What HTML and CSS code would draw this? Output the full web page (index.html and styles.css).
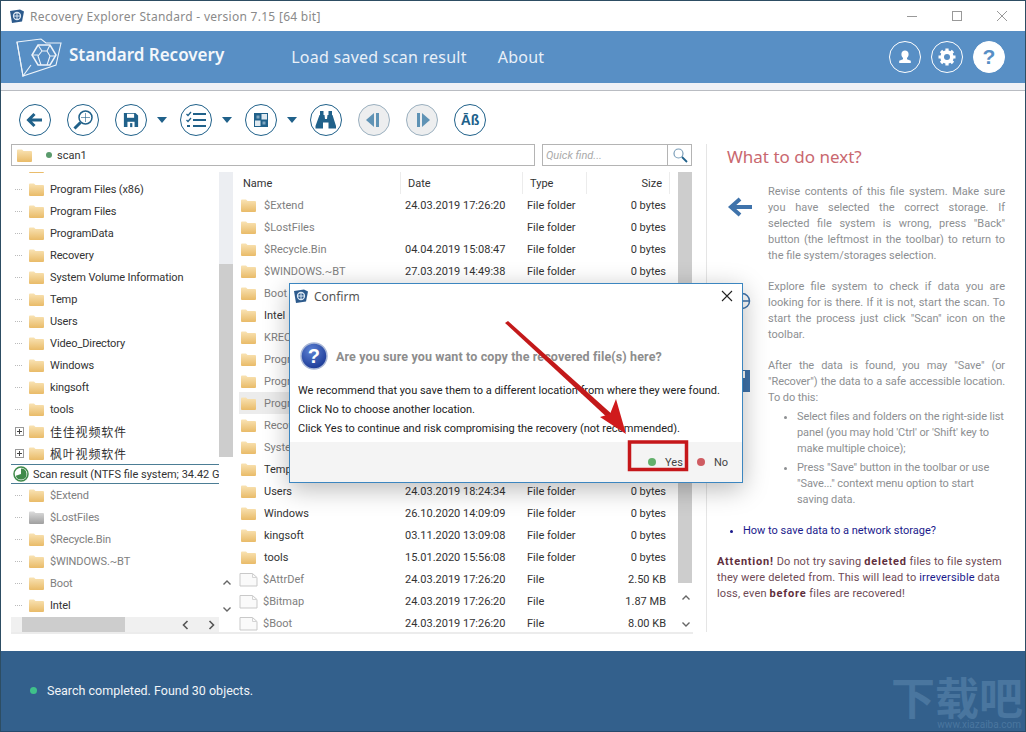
FILE: index.html
```html
<!DOCTYPE html>
<html lang="en">
<head>
    <meta charset="UTF-8">
    <meta name="viewport" content="width=device-width, initial-scale=1.0">
    <title>Recovery Explorer Standard</title>
    <link rel="stylesheet" href="styles.css">
</head>
<body>

    <!-- shared icons -->
    <svg class="defs" width="0" height="0">
        <defs>
            <linearGradient id="fold" x1="0" y1="0" x2="0" y2="1">
                <stop offset="0" stop-color="#f9e3b4"/>
                <stop offset="1" stop-color="#e9bb68"/>
            </linearGradient>
            <linearGradient id="foldgray" x1="0" y1="0" x2="0" y2="1">
                <stop offset="0" stop-color="#dcdcdc"/>
                <stop offset="1" stop-color="#9f9f9f"/>
            </linearGradient>
            <radialGradient id="qmark" cx="0.4" cy="0.3" r="0.8">
                <stop offset="0" stop-color="#5d82d4"/>
                <stop offset="1" stop-color="#13308e"/>
            </radialGradient>
        </defs>
        <symbol id="folder" viewBox="0 0 17 15">
            <path d="M1 2.500q0-1 1-1h4l1.500 1.500h7.500q1 0 1 1v9q0 1-1 1h-13q-1 0-1-1z" fill="url(#fold)"/>
        </symbol>
        <symbol id="folder-gray" viewBox="0 0 17 15">
            <path d="M1 2.500q0-1 1-1h4l1.500 1.500h7.500q1 0 1 1v9q0 1-1 1h-13q-1 0-1-1z" fill="url(#foldgray)"/>
        </symbol>
        <symbol id="file" viewBox="0 0 19 15">
            <path d="M1 1.500h12.500l4.500 4v8.500h-17z" fill="#fafafa" stroke="#c9c9c9"/>
            <path d="M13.500 1.500v4h4.500" fill="none" stroke="#d4d4d4"/>
        </symbol>
        <symbol id="applogo" viewBox="0 0 16 15">
            <path d="M1 2l10-1.500 4 2-2 10-10 1.500z" fill="#2c5a8c"/>
            <circle cx="8" cy="7" r="3.500" fill="none" stroke="#dbe7f3" stroke-width="1.300"/>
            <path d="M8 3.500v7M4.800 7h6.400" stroke="#dbe7f3"/>
        </symbol>
        <symbol id="chev" viewBox="0 0 10 7">
            <path d="M1.500 5.500l3.500-3.500 3.500 3.500" fill="none" stroke="#666" stroke-width="1.400"/>
        </symbol>
    </svg>

    <div class="window">

        <!-- title bar -->
        <div class="titlebar">
            <svg class="app-icon"><use href="#applogo"/></svg>
            <span class="title-text">Recovery Explorer Standard - version 7.15 [64 bit]</span>
            <div class="win-btns">
                <svg width="12" height="12" viewBox="0 0 12 12"><path d="M1 6.500h10" stroke="#999"/></svg>
                <svg width="12" height="12" viewBox="0 0 12 12"><rect x="1.500" y="1.500" width="9" height="9" fill="none" stroke="#999"/></svg>
                <svg width="12" height="12" viewBox="0 0 12 12"><path d="M1 1l10 10M11 1l-10 10" stroke="#999"/></svg>
            </div>
        </div>

        <!-- blue header -->
        <div class="header">
            <svg class="logo" width="46" height="40" viewBox="0 0 46 40" fill="none" stroke="#eef4fa" stroke-width="1.100">
                <path d="M1 5l24-3 5 4h15l-5 22-33 11z"/>
                <path d="M1 5l6 34 8-11"/>
                <path d="M22 8h12l6 10-6 10h-12l-6-10z" stroke-width="1.500"/>
                <path d="M22 8l4 6h5l3-6M26 14l-4 5 3 9M31 14l3 5-3 9M16 18h6M34 19h6" stroke-width="1.100"/>
            </svg>
            <span class="brand">Standard Recovery</span>
            <a class="nav-link nav-first">Load saved scan result</a>
            <a class="nav-link">About</a>
            <div class="head-btns">
                <div class="head-btn">
                    <svg width="18" height="18" viewBox="0 0 18 18"><path d="M9 2.500a3.600 3.600 0 0 1 3.600 3.800c0 1.600-.8 3-1.600 3.600v1.300l3.800 1.500v2.300h-11.600v-2.300l3.800-1.500v-1.300c-.8-.6-1.600-2-1.600-3.600a3.600 3.600 0 0 1 3.600-3.800z" fill="#fff"/></svg>
                </div>
                <div class="head-btn">
                    <svg width="22" height="22" viewBox="0 0 22 22"><circle cx="11" cy="11" r="5" fill="none" stroke="#fff" stroke-width="3.400"/><path d="M11 2.500v17M2.500 11h17M5 5l12 12M17 5l-12 12" stroke="#fff" stroke-width="3.200"/><circle cx="11" cy="11" r="3" fill="#588fc5"/></svg>
                </div>
                <div class="head-btn head-btn-help">?</div>
            </div>
        </div>
        <div class="head-strip"></div>

        <div class="content">
            <div class="left">

                <!-- toolbar -->
                <div class="toolbar">
                    <div class="tool">
                        <svg width="20" height="20" viewBox="0 0 20 20"><path d="M3 10h14M9.500 4l-6 6 6 6" fill="none" stroke="#20618a" stroke-width="3"/></svg>
                    </div>
                    <div class="tool">
                        <svg width="24" height="24" viewBox="0 0 24 24" fill="none" stroke="#20618a"><circle cx="14.500" cy="9.500" r="6.500" stroke-width="1.500"/><path d="M9.500 14.500l-6 6" stroke-width="3"/><path d="M14.500 5v9M10 9.500h9" stroke-width="1" opacity=".6"/></svg>
                    </div>
                    <div class="tool">
                        <svg width="16" height="16" viewBox="0 0 18 18"><path d="M1 1h13l3 3v13h-16z" fill="#20618a"/><rect x="4.500" y="2" width="8" height="4.500" fill="#fff"/><rect x="5" y="11" width="8" height="6" fill="#fff"/><rect x="8" y="12.500" width="2.500" height="4.500" fill="#20618a"/></svg>
                    </div>
                    <div class="caret"></div>
                    <div class="tool">
                        <svg width="22" height="20" viewBox="0 0 22 20" fill="none" stroke="#20618a"><path d="M1.500 4l1.500 1.500 3-3.500M1.500 10l1.500 1.500 3-3.500" stroke-width="1.300"/><path d="M2 16h3" stroke-width="2"/><path d="M8 4h13M8 10h13M8 16h13" stroke-width="2"/></svg>
                    </div>
                    <div class="caret"></div>
                    <div class="tool">
                        <svg width="14" height="14" viewBox="0 0 14 14"><rect width="14" height="14" fill="#20618a"/><rect x="7.500" y="1" width="5.500" height="5.500" fill="#dfe9f0"/><rect x="1" y="7.500" width="5.500" height="5.500" fill="#dfe9f0"/><rect x="2.500" y="2.500" width="3" height="3" fill="#7fa6c0"/><rect x="8.500" y="8.500" width="3" height="3" fill="#7fa6c0"/></svg>
                    </div>
                    <div class="caret"></div>
                    <div class="tool">
                        <svg width="22" height="20" viewBox="0 0 22 20" fill="#20618a"><path d="M5 1h3.500v4h-3.500zM13.500 1h3.500v4h-3.500z"/><path d="M4.500 5h5l.5 4h2l.5-4h5l3.500 11v2.500h-7.500v-6h-5.500v6h-7.500v-2.500z"/></svg>
                    </div>
                    <div class="tool tool-off">
                        <svg width="18" height="16" viewBox="0 0 18 16" fill="#5f93b5"><path d="M9 1v14l-8-7z"/><rect x="11" y="1" width="3" height="14"/></svg>
                    </div>
                    <div class="tool tool-off">
                        <svg width="18" height="16" viewBox="0 0 18 16" fill="#5f93b5"><rect x="4" y="1" width="3" height="14"/><path d="M9 1v14l8-7z"/></svg>
                    </div>
                    <div class="tool tool-text">Āß</div>
                </div>

                <!-- path + quick find -->
                <div class="searchrow">
                    <div class="pathbar">
                        <svg class="ico ico-path"><use href="#folder"/></svg>
                        <span class="dot dot-green"></span>
                        <span>scan1</span>
                    </div>
                    <div class="quick">
                        <span class="quick-text">Quick find...</span>
                        <div class="quick-btn">
                            <svg width="16" height="16" viewBox="0 0 16 16" fill="none"><circle cx="6.500" cy="6.500" r="4.500" stroke="#7a9db8" stroke-width="1.200"/><path d="M10 10l5 5" stroke="#20618a" stroke-width="1.800"/></svg>
                        </div>
                    </div>
                </div>

                <div class="panes">

                    <!-- tree -->
                    <div class="tree">
                        <div class="tree-inner">
                            <div class="tree-rows">
                                <div class="cut-row"><svg class="ico"><use href="#folder"/></svg></div>
                                <div class="trow"><i class="dots"></i><svg class="ico"><use href="#folder"/></svg>Program Files (x86)</div>
                                <div class="trow"><i class="dots"></i><svg class="ico"><use href="#folder"/></svg>Program Files</div>
                                <div class="trow"><i class="dots"></i><svg class="ico"><use href="#folder"/></svg>ProgramData</div>
                                <div class="trow"><i class="dots"></i><svg class="ico"><use href="#folder"/></svg>Recovery</div>
                                <div class="trow"><i class="dots"></i><svg class="ico"><use href="#folder"/></svg>System Volume Information</div>
                                <div class="trow"><i class="dots"></i><svg class="ico"><use href="#folder"/></svg>Temp</div>
                                <div class="trow"><i class="dots"></i><svg class="ico"><use href="#folder"/></svg>Users</div>
                                <div class="trow"><i class="dots"></i><svg class="ico"><use href="#folder"/></svg>Video_Directory</div>
                                <div class="trow"><i class="dots"></i><svg class="ico"><use href="#folder"/></svg>Windows</div>
                                <div class="trow"><i class="dots"></i><svg class="ico"><use href="#folder"/></svg>kingsoft</div>
                                <div class="trow"><i class="dots"></i><svg class="ico"><use href="#folder"/></svg>tools</div>
                                <div class="trow cjk"><i class="plus"></i><svg class="ico"><use href="#folder"/></svg>佳佳视频软件</div>
                                <div class="trow cjk"><i class="plus"></i><svg class="ico"><use href="#folder"/></svg>枫叶视频软件</div>
                                <div class="scanrow">
                                    <svg width="16" height="16" viewBox="0 0 16 16"><circle cx="8" cy="8" r="7" fill="#fff" stroke="#3f8a4a" stroke-width="1.500"/><path d="M8 8v-5.500a5.500 5.500 0 1 1-5.200 7.200z" fill="#3f8a4a"/></svg>
                                    <span>Scan result (NTFS file system; 34.42 GB)</span>
                                </div>
                                <div class="trow muted"><i class="dots"></i><svg class="ico"><use href="#folder"/></svg>$Extend</div>
                                <div class="trow muted"><i class="dots"></i><svg class="ico"><use href="#folder-gray"/></svg>$LostFiles</div>
                                <div class="trow muted"><i class="dots"></i><svg class="ico"><use href="#folder"/></svg>$Recycle.Bin</div>
                                <div class="trow muted"><i class="dots"></i><svg class="ico"><use href="#folder"/></svg>$WINDOWS.~BT</div>
                                <div class="trow muted"><i class="dots"></i><svg class="ico"><use href="#folder"/></svg>Boot</div>
                                <div class="trow"><i class="dots"></i><svg class="ico"><use href="#folder"/></svg>Intel</div>
                            </div>
                            <div class="vscroll">
                                <div class="track-top"></div>
                                <div class="thumb tree-thumb"></div>
                                <svg class="chev chev-up"><use href="#chev"/></svg>
                                <svg class="chev chev-down"><use href="#chev"/></svg>
                            </div>
                        </div>
                        <div class="hscroll">
                            <div class="hgap"></div>
                            <div class="hthumb"></div>
                            <div class="harrows">
                                <svg width="7" height="10" viewBox="0 0 7 10"><path d="M5.500 1l-4 4 4 4" fill="none" stroke="#555" stroke-width="1.600"/></svg>
                                <svg width="7" height="10" viewBox="0 0 7 10"><path d="M1.500 1l4 4-4 4" fill="none" stroke="#555" stroke-width="1.600"/></svg>
                            </div>
                        </div>
                    </div>

                    <!-- file list -->
                    <div class="list">
                        <div class="list-rows">
                            <div class="lhead">
                                <div>Name</div><div>Date</div><div>Type</div><div class="size">Size</div>
                            </div>
                            <div class="lrow muted"><div class="cname"><svg class="ico"><use href="#folder"/></svg>$Extend</div><div class="dark">24.03.2019 17:26:20</div><div class="dark">File folder</div><div class="size dark">0 bytes</div></div>
                            <div class="lrow muted"><div class="cname"><svg class="ico"><use href="#folder"/></svg>$LostFiles</div><div></div><div class="dark">File folder</div><div class="size dark">0 bytes</div></div>
                            <div class="lrow muted"><div class="cname"><svg class="ico"><use href="#folder"/></svg>$Recycle.Bin</div><div class="dark">04.04.2019 15:08:47</div><div class="dark">File folder</div><div class="size dark">0 bytes</div></div>
                            <div class="lrow muted"><div class="cname"><svg class="ico"><use href="#folder"/></svg>$WINDOWS.~BT</div><div class="dark">27.03.2019 14:49:38</div><div class="dark">File folder</div><div class="size dark">0 bytes</div></div>
                            <div class="lrow muted"><div class="cname"><svg class="ico"><use href="#folder"/></svg>Boot</div></div>
                            <div class="lrow"><div class="cname"><svg class="ico"><use href="#folder"/></svg>Intel</div></div>
                            <div class="lrow muted"><div class="cname"><svg class="ico"><use href="#folder"/></svg>KRECYCLE</div></div>
                            <div class="lrow muted"><div class="cname"><svg class="ico"><use href="#folder"/></svg>Program Files</div></div>
                            <div class="lrow muted"><div class="cname"><svg class="ico"><use href="#folder"/></svg>Program Files (x86)</div></div>
                            <div class="lrow muted lrow-sel"><div class="cname"><svg class="ico"><use href="#folder"/></svg>ProgramData</div></div>
                            <div class="lrow muted"><div class="cname"><svg class="ico"><use href="#folder"/></svg>Recovery</div></div>
                            <div class="lrow muted"><div class="cname"><svg class="ico"><use href="#folder"/></svg>System Volume</div></div>
                            <div class="lrow"><div class="cname"><svg class="ico"><use href="#folder"/></svg>Temp</div></div>
                            <div class="lrow"><div class="cname"><svg class="ico"><use href="#folder"/></svg>Users</div><div>24.03.2019 18:24:34</div><div>File folder</div><div class="size">0 bytes</div></div>
                            <div class="lrow"><div class="cname"><svg class="ico"><use href="#folder"/></svg>Windows</div><div>26.10.2020 14:09:09</div><div>File folder</div><div class="size">0 bytes</div></div>
                            <div class="lrow"><div class="cname"><svg class="ico"><use href="#folder"/></svg>kingsoft</div><div>03.11.2020 13:09:08</div><div>File folder</div><div class="size">0 bytes</div></div>
                            <div class="lrow"><div class="cname"><svg class="ico"><use href="#folder"/></svg>tools</div><div>15.01.2020 15:56:08</div><div>File folder</div><div class="size">0 bytes</div></div>
                            <div class="lrow muted"><div class="cname"><svg class="ico ico-file"><use href="#file"/></svg>$AttrDef</div><div class="dark">24.03.2019 17:26:20</div><div class="dark">File</div><div class="size dark">2.50 KB</div></div>
                            <div class="lrow muted"><div class="cname"><svg class="ico ico-file"><use href="#file"/></svg>$Bitmap</div><div class="dark">24.03.2019 17:26:20</div><div class="dark">File</div><div class="size dark">1.87 MB</div></div>
                            <div class="lrow muted"><div class="cname"><svg class="ico ico-file"><use href="#file"/></svg>$Boot</div><div class="dark">24.03.2019 17:26:20</div><div class="dark">File</div><div class="size dark">8.00 KB</div></div>
                        </div>
                        <div class="vscroll">
                            <div class="thumb list-thumb"></div>
                            <svg class="chev chev-up"><use href="#chev"/></svg>
                            <svg class="chev chev-down"><use href="#chev"/></svg>
                        </div>
                    </div>
                </div>
            </div>

            <!-- help panel -->
            <div class="help">
                <h2>What to do next?</h2>
                <div class="help-item">
                    <svg class="help-arrow" width="26" height="22" viewBox="0 0 26 22"><path d="M25 11h-20M13 3l-9 8 9 8" fill="none" stroke="#3f73ab" stroke-width="4"/></svg>
                    <p>Revise contents of this file system. Make sure you have selected the correct storage. If selected file system is wrong, press "Back" button (the leftmost in the toolbar) to return to the file system/storages selection.</p>
                </div>
                <div class="help-item">
                    <div class="help-ico"></div>
                    <p>Explore file system to check if data you are looking for is there. If it is not, start the scan. To start the process just click "Scan" icon on the toolbar.</p>
                </div>
                <div class="help-item tight">
                    <div class="help-ico"></div>
                    <div>
                        <p>After the data is found, you may "Save" (or "Recover") the data to a safe accessible location. To do this:</p>
                        <ul>
                            <li>Select files and folders on the right-side list panel (you may hold 'Ctrl' or 'Shift' key to make multiple choice);</li>
                            <li>Press "Save" button in the toolbar or use "Save..." context menu option to start saving data.</li>
                        </ul>
                    </div>
                </div>
                <ul class="help-link"><li>How to save data to a network storage?</li></ul>
                <p class="attention"><b class="att-red">Attention!</b> Do not try saving <b>deleted</b> files to file system they were deleted from. This will lead to <span class="irr">irreversible</span> data loss, even <b>before</b> files are recovered!</p>
            </div>
        </div>

        <!-- status bar -->
        <div class="statusbar">
            <span class="dot dot-status"></span>
            <span>Search completed. Found 30 objects.</span>
        </div>

        <div class="watermark">
            <div class="wm-big">下载吧</div>
            <div class="wm-small">www.xiazaiba.com</div>
        </div>

        <!-- parts of help icons that stick out from behind the dialog -->
        <svg class="peek peek-scan" width="13" height="18" viewBox="0 0 13 18" fill="none" stroke="#3f73ab" stroke-width="1.500"><path d="M0 1.500a7.500 7.500 0 0 1 0 15M0 9h7"/></svg>
        <svg class="peek peek-save" width="9" height="24" viewBox="0 0 9 24"><path d="M0 0h8v22h-8z" fill="#3f73ab"/><rect x="0" y="1" width="3" height="7" fill="#fff"/></svg>

        <!-- confirm dialog -->
        <div class="dialog">
            <div class="dlg-title">
                <svg class="app-icon"><use href="#applogo"/></svg>
                <span>Confirm</span>
                <svg class="dlg-close" width="12" height="12" viewBox="0 0 12 12"><path d="M1 1l10 10M11 1l-10 10" stroke="#222" stroke-width="1.100"/></svg>
            </div>
            <div class="dlg-body">
                <div class="dlg-question">
                    <svg width="28" height="28" viewBox="0 0 28 28"><circle cx="14" cy="14" r="13" fill="url(#qmark)" stroke="#a9b7d6" stroke-width="1.500"/><text x="14" y="21" text-anchor="middle" font-family="Liberation Sans" font-weight="700" font-size="20" fill="#fff">?</text></svg>
                    <span>Are you sure you want to copy the recovered file(s) here?</span>
                </div>
                <div class="dlg-lines">
                    <div>We recommend that you save them to a different location from where they were found.</div>
                    <div>Click No to choose another location.</div>
                    <div>Click Yes to continue and risk compromising the recovery (not recommended).</div>
                </div>
            </div>
            <div class="dlg-foot">
                <span class="dot dot-yes"></span><span class="dlg-btn">Yes</span>
                <span class="dot dot-no"></span><span class="dlg-btn">No</span>
            </div>
        </div>

        <!-- red annotation over the dialog -->
        <svg class="annot" width="200" height="155" viewBox="0 0 200 155">
            <path d="M6 2l3-2 106 95-4 4z" fill="#c3191a"/>
            <path d="M127 113l-26-17 10-3 6-15z" fill="#d01a1c"/>
            <rect x="130.500" y="121" width="57" height="27.500" fill="none" stroke="#c5171a" stroke-width="3.500"/>
        </svg>
    </div>

</body>
</html>
```

FILE: styles.css
```css
/* base */
html, body {
    margin: 0;
    height: 100%;
}
body {
    background: #fff;
    color: #333;
    font-family: Roboto, "Noto Sans CJK SC", sans-serif;
    font-size: 11px;
    overflow: hidden;
}
.defs {
    position: absolute;
}
.window {
    position: relative;
    width: 1026px;
    height: 732px;
    box-sizing: border-box;
    border: 1px solid #2d4d63;
    border-bottom-color: #264a6c;
    display: flex;
    flex-direction: column;
    overflow: hidden;
}

/* title bar */
.titlebar {
    height: 30px;
    flex: none;
    display: flex;
    align-items: center;
    padding: 0 0 0 8px;
    font-family: "Noto Sans", sans-serif;
}
.app-icon {
    width: 16px;
    height: 15px;
    flex: none;
}
.title-text {
    margin-left: 5px;
    color: #8a8a8a;
    font-size: 12px;
    letter-spacing: 0.28px;
}
.win-btns {
    margin-left: auto;
    display: flex;
    gap: 33px;
    padding-right: 17px;
}

/* header */
.header {
    height: 52px;
    flex: none;
    background: #588fc5;
    color: #fff;
    display: flex;
    align-items: center;
    padding-left: 15px;
    font-family: "Noto Sans", sans-serif;
}
.brand {
    margin-left: 7px;
    font-size: 17px;
    font-weight: 600;
    margin-top: -5px;
    color: #f4f7fb;
}
.nav-link {
    font-size: 16px;
    color: #e9f0f8;
    margin-left: 31px;
    letter-spacing: 0.25px;
}
.nav-first {
    margin-left: 67px;
}
.head-btns {
    margin-left: auto;
    display: flex;
    gap: 10px;
    padding-right: 20px;
}
.head-btn {
    width: 30px;
    height: 30px;
    border: 1px solid #fff;
    border-radius: 50%;
    display: flex;
    align-items: center;
    justify-content: center;
}
.head-btn-help {
    background: #fff;
    color: #588fc5;
    font: 700 21px "Liberation Sans", sans-serif;
}
.head-strip {
    height: 7px;
    flex: none;
    background: #eff1f6;
    border-bottom: 1px solid #b9bcc2;
}

/* main area */
.content {
    flex: 1;
    display: flex;
    min-height: 0;
}
.left {
    width: 692px;
    flex: none;
    display: flex;
    flex-direction: column;
    padding: 13px 0 0 10px;
    box-sizing: border-box;
}

/* toolbar */
.toolbar {
    display: flex;
    align-items: center;
    height: 32px;
    padding-left: 8px;
    gap: 16px;
}
.tool {
    width: 30px;
    height: 30px;
    border: 1px solid #20618a;
    border-radius: 50%;
    display: flex;
    align-items: center;
    justify-content: center;
    flex: none;
}
.tool-off {
    background: #edeeef;
    border-color: #9bb0bf;
}
.tool-text {
    color: #20618a;
    font: 700 14px "Liberation Sans", sans-serif;
}
.caret {
    width: 0;
    height: 0;
    border-left: 5px solid transparent;
    border-right: 5px solid transparent;
    border-top: 6px solid #20618a;
    margin-left: -6px;
    margin-right: -3px;
}

/* search row */
.searchrow {
    display: flex;
    gap: 7px;
    margin-top: 8px;
    height: 22px;
    flex: none;
}
.pathbar {
    width: 524px;
    box-sizing: border-box;
    border: 1px solid #b4b4b4;
    display: flex;
    align-items: center;
    padding-left: 4px;
    color: #333;
}
.ico {
    width: 17px;
    height: 15px;
    flex: none;
}
.ico-path {
    margin-right: 13px;
}
.dot {
    width: 6px;
    height: 6px;
    border-radius: 50%;
    display: inline-block;
    flex: none;
}
.dot-green {
    background: #5a9a6c;
    margin-right: 5px;
}
.quick {
    width: 150px;
    box-sizing: border-box;
    border: 1px solid #b4b4b4;
    display: flex;
    align-items: center;
}
.quick-text {
    flex: 1;
    padding-left: 3px;
    color: #aaa;
    font-style: italic;
}
.quick-btn {
    width: 23px;
    height: 100%;
    border-left: 1px solid #b4b4b4;
    display: flex;
    align-items: center;
    justify-content: center;
}

/* panes */
.panes {
    display: flex;
    flex: 1;
    min-height: 0;
    margin-top: 6px;
    margin-bottom: 17px;
    border-bottom: 2px solid #ececec;
}
.tree {
    width: 222px;
    flex: none;
    display: flex;
    flex-direction: column;
    min-height: 0;
}
.tree-inner {
    flex: 1;
    display: flex;
    min-height: 0;
}
.tree-rows {
    flex: 1;
    min-width: 0;
    overflow: hidden;
    white-space: nowrap;
}
.cut-row {
    height: 6px;
    overflow: hidden;
    padding-left: 17px;
}
.cut-row .ico {
    display: block;
    margin-top: -13px;
}
.trow {
    height: 22px;
    display: flex;
    align-items: center;
    color: #333;
    letter-spacing: -.12px;
}
.trow .ico {
    margin-right: 5px;
}
.trow.cjk {
    font-size: 12px;
    letter-spacing: .8px;
}
.muted {
    color: #7e7e7e;
}
.trow.muted {
    color: #7e7e7e;
}
.dots {
    width: 7px;
    margin: 0 6px 0 4px;
    border-top: 1px dotted #bbb;
    flex: none;
}
.plus {
    width: 7px;
    height: 7px;
    border: 1px solid #999;
    margin: 0 4px 0 4px;
    flex: none;
    background:
        linear-gradient(#444, #444) center / 5px 1px no-repeat,
        linear-gradient(#444, #444) center / 1px 5px no-repeat;
}
.scanrow {
    height: 18px;
    display: flex;
    align-items: center;
    gap: 4px;
    border-top: 1px solid #4c7d95;
    border-bottom: 1px solid #4c7d95;
    padding-left: 2px;
    color: #333;
}
.scanrow svg {
    flex: none;
}

/* scrollbars */
.vscroll {
    position: relative;
    width: 14px;
    flex: none;
    background: #fff;
}
.thumb {
    background: #cdcdcd;
}
.track-top {
    height: 92px;
    background: #eceef2;
}
.tree-thumb {
    height: 193px;
}
.list-thumb {
    height: 411px;
}
.chev {
    position: absolute;
    left: 3px;
    width: 10px;
    height: 7px;
}
.chev-up {
    bottom: 31px;
}
.chev-down {
    bottom: 4px;
    transform: rotate(180deg);
}
.hscroll {
    height: 15px;
    flex: none;
    background: #f0f0f0;
    display: flex;
    align-items: center;
    margin-right: 14px;
}
.hgap {
    width: 11px;
}
.hthumb {
    width: 103px;
    height: 100%;
    background: #cdcdcd;
}
.harrows {
    margin-left: auto;
    display: flex;
    gap: 19px;
    padding-right: 4px;
}

/* file list */
.list {
    flex: 1;
    min-width: 0;
    margin-left: 3px;
    padding-right: 1px;
    display: flex;
}
.list-rows {
    flex: 1;
    min-width: 0;
    overflow: hidden;
}
.lhead,
.lrow {
    display: grid;
    grid-template-columns: 165px 122px 64px 83px;
    align-items: center;
    white-space: nowrap;
}
.lhead {
    height: 22px;
    color: #333;
}
.lhead > div {
    padding-left: 7px;
    height: 100%;
    display: flex;
    align-items: center;
    border-right: 1px solid #ececec;
}
.lhead > .size {
    justify-content: flex-end;
    padding-right: 7px;
}
.lrow {
    height: 22px;
}
.lrow > div {
    padding-left: 4px;
}
.lrow-sel {
    background: #ececec;
    margin-left: 3px;
}
.lrow-sel > .cname {
    padding-left: 1px;
}
.cname {
    display: flex;
    align-items: center;
    gap: 7px;
}
.dark {
    color: #333;
}
.lrow > .size {
    text-align: right;
    padding-right: 4px;
}
.ico-file {
    width: 19px;
    margin-left: -1px;
    margin-right: -2px;
}

/* help panel */
.help {
    flex: 1;
    min-width: 0;
    margin: 53px 0 19px 13px;
    border-left: 1px solid #e5e5e5;
    padding: 0 20px 0 20px;
    color: #8d8f92;
    line-height: 16px;
}
.help h2 {
    margin: 2px 0 16px;
    color: #c9686f;
    font-family: "Noto Sans", sans-serif;
    font-size: 17px;
    font-weight: 400;
    line-height: 22px;
}
.help p {
    margin: 0;
    text-align: justify;
}
.help-item {
    display: flex;
    margin-bottom: 15px;
}
.tight {
    letter-spacing: -.08px;
}
.help-arrow {
    flex: none;
    margin: 12px 15px 0 0;
}
.help-ico {
    width: 41px;
    flex: none;
}
.help ul {
    margin: 3px 0 0;
    padding-left: 29px;
}
.help-item li {
    margin-bottom: 3px;
}
.help .help-link {
    color: #1a1a8c;
    margin-top: -3px;
    padding-left: 16px;
}
.help .attention {
    color: #6e4a55;
    margin: 15px 0 0 -10px;
    text-align: left;
    letter-spacing: .15px;
}
.attention b {
    color: #5f2f3d;
    letter-spacing: .8px;
}
.irr {
    color: #1a1a8c;
}

/* status bar */
.statusbar {
    height: 80px;
    flex: none;
    box-sizing: border-box;
    padding: 0 0 2px 29px;
    background: #33608c;
    color: #f0f4f8;
    display: flex;
    align-items: center;
    gap: 10px;
    font-size: 12.500px;
}
.dot-status {
    width: 7px;
    height: 7px;
    background: #3fc18a;
}

/* watermark */
.watermark {
    position: absolute;
    right: 4px;
    bottom: 0;
    width: 130px;
    color: #4a769f;
}
.wm-big {
    font-size: 44px;
    line-height: 46px;
    font-weight: 700;
    white-space: nowrap;
    font-family: "Noto Sans CJK SC", sans-serif;
}
.wm-small {
    font-size: 10px;
    line-height: 12px;
    text-align: right;
}

/* bits of the help icons */
.peek {
    position: absolute;
}
.peek-scan {
    left: 741px;
    top: 291px;
}
.peek-save {
    left: 741px;
    top: 369px;
}

/* dialog */
.dialog {
    position: absolute;
    left: 288px;
    top: 282px;
    width: 454px;
    height: 200px;
    box-sizing: border-box;
    border: 1px solid #3c86c0;
    background: #fff;
    display: flex;
    flex-direction: column;
    box-shadow: 0 6px 24px rgba(0, 0, 0, .28);
    color: #222;
}
.dlg-title {
    height: 24px;
    flex: none;
    display: flex;
    align-items: center;
    padding-left: 3px;
    gap: 5px;
    font-family: "Noto Sans", sans-serif;
    font-size: 12px;
    color: #555;
}
.dlg-close {
    margin-left: auto;
    margin-right: 9px;
}
.dlg-body {
    flex: 1;
    padding: 0 8px;
}
.dlg-question {
    display: flex;
    align-items: center;
    gap: 8px;
    margin: 34px 0 11px 2px;
    color: #8d8d8d;
    font-weight: 700;
    font-size: 12.500px;
    letter-spacing: .12px;
}
.dlg-lines {
    line-height: 19px;
}
.dlg-foot {
    height: 40px;
    flex: none;
    background: #f4f4f4;
    display: flex;
    align-items: center;
    justify-content: flex-end;
    padding-right: 14px;
    color: #444;
}
.dot-yes {
    width: 8px;
    height: 8px;
    background: #63b06c;
    margin-right: 9px;
}
.dot-no {
    width: 8px;
    height: 8px;
    background: #cf5c62;
    margin: 0 9px 0 14px;
}

/* annotation */
.annot {
    position: absolute;
    left: 498px;
    top: 320px;
}
```
